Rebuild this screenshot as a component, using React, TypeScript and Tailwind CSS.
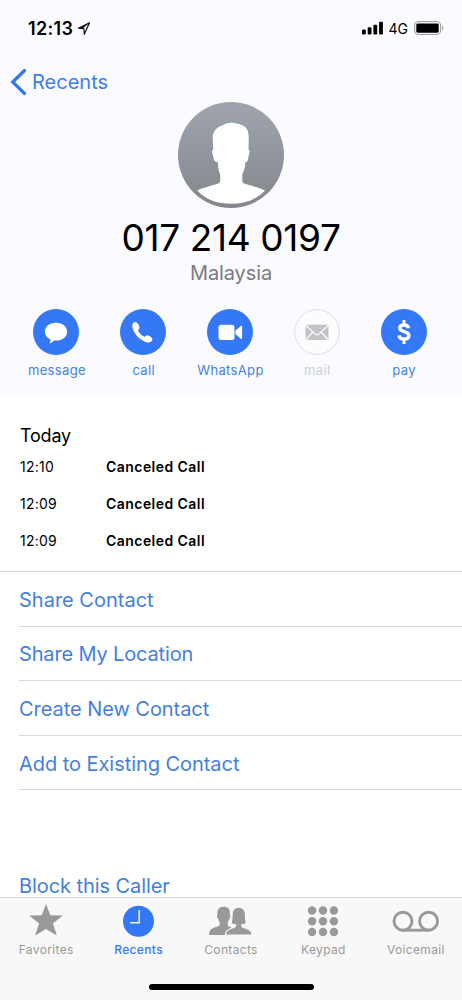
import type { ReactNode } from "react";

function LocationIcon() {
  return (
    <svg width="14" height="15" viewBox="0 0 14 15">
      <path d="M12.500 1.800 1.500 7.200l5.400.5.400 5.600z" fill="none" stroke="#111" strokeWidth="1.200" strokeLinejoin="round" />
      <path d="M12.500 1.800 1.500 7.200l4.200.4z" fill="#111" />
    </svg>
  );
}

function StatusBar() {
  return (
    <div className="flex h-14 items-center justify-between pl-7 pr-[18px]">
      <div className="flex items-center gap-1">
        <span className="pt-px text-[18px] font-semibold leading-6 tracking-[0.3px]">12:13</span>
        <LocationIcon />
      </div>
      <div className="flex items-center gap-[6px]">
        <svg width="21" height="14" viewBox="0 0 21 14">
          <rect x="0" y="8.600" width="3.800" height="4.900" rx="1.200" />
          <rect x="5.700" y="6.300" width="3.800" height="7.200" rx="1.200" />
          <rect x="11.400" y="3.700" width="3.800" height="9.800" rx="1.200" />
          <rect x="17.100" y="0.800" width="3.800" height="12.700" rx="1.200" />
        </svg>
        <span className="pt-px text-[14px] leading-5">4G</span>
        <svg width="30" height="14" viewBox="0 0 30 14">
          <rect x="0.600" y="0.600" width="26" height="12.800" rx="3.400" fill="none" stroke="#999" />
          <rect x="2.300" y="2.500" width="22.400" height="9.200" rx="1.400" />
          <path d="M28.200 4.800c1.600.6 1.600 3.800 0 4.400z" fill="#999" />
        </svg>
      </div>
    </div>
  );
}

function Avatar() {
  return (
    <svg width="106" height="106" viewBox="0 0 106 106">
      <defs>
        <linearGradient id="avatar" x1="0" y1="0" x2="0" y2="1">
          <stop offset="0" stopColor="#9fa4ae" />
          <stop offset="1" stopColor="#83868c" />
        </linearGradient>
      </defs>
      <circle cx="53" cy="53" r="53" fill="url(#avatar)" />
      <path
        fill="#fff"
        d="M19.300 88.500C25 85.500 31 84.500 37 82.500c4-1 5-1.500 5.200-4V72c-1.500-2-2-7-2.500-12-2 0-3.200-.5-3.700-2.500l-2-8c0-1 .4-1.600 1.200-1.600L34.700 36c0-6 3.300-11 10.600-13 3-2 10-3 14-1.200 5 .7 10 3.200 11 9.200.8 4 .3 11 .2 17 .8 0 1.200.6 1 1.600L70 57.500c-.4 2-1.200 2.500-2.500 2.500-.5 5-1 8-3.200 12v6.500c.2 2.500 1.200 3 5.200 4 6 2 12 3 17.500 6C78.500 97.500 67 101.700 53 101.700S27.500 97.500 19.300 88.500z"
      />
    </svg>
  );
}

const actions: { label: string; icon: ReactNode; disabled?: boolean }[] = [
  {
    label: "message",
    icon: <path fill="#fff" d="M23 13.700c6.400 0 11.200 3.900 11.200 9s-4.800 8.900-11.200 8.900c-.7 0-1.400 0-2-.1-1.100 1.600-2.700 2.700-4.700 2.900.9-1 1.400-2.600 1-4-3.300-1.600-5.500-4.500-5.500-7.700 0-5.100 4.800-9 11.200-9z" />,
  },
  {
    label: "call",
    icon: <path fill="#fff" d="M13 14.300c.8-1.100 1.900-1.700 2.900-1.200 1.500.7 3 2.900 3.500 4.700.3 1.200-.1 2-1 2.900-.4.500-.3 1 .1 1.700 1.400 2.200 3.100 3.800 5.300 5.100.7.400 1.200.3 1.600-.2.900-1.100 1.900-1.300 3-.7 1.700.8 3.700 2.100 4 3.400.3 1.100-.8 2.500-2 3.100-2.500 1.100-6.800-.4-10.500-3.400-3.400-2.800-6.500-7-7.300-10.500-.4-1.600-.4-3.600.4-4.900z" />,
  },
  {
    label: "WhatsApp",
    icon: (
      <g fill="#fff">
        <rect x="11.500" y="15.700" width="16" height="15.300" rx="2.800" />
        <path d="m28.500 21.500 5.200-4.500c.8-.6 1.400-.3 1.400.6v11.600c0 .9-.6 1.200-1.400.6l-5.200-4.500z" />
      </g>
    ),
  },
  {
    label: "mail",
    disabled: true,
    icon: (
      <g>
        <path fill="#c3c3c6" d="M11.500 15.700h23V31h-23z" />
        <path d="m11.500 16 9.500 9q2 1.500 4 0l9.500-9M11.500 31l7.500-8M34.500 31l-7.500-8" fill="none" stroke="#fafaff" strokeWidth="1.300" />
      </g>
    ),
  },
  {
    label: "pay",
    icon: (
      <g fill="none" stroke="#fff" strokeWidth="3.500">
        <path d="M27.500 19.200c-.3-2.200-2-3.200-4.500-3.200-2.600 0-4.200 1.200-4.200 3.100 0 4.900 9 2.200 9 7.300 0 2.300-1.800 3.600-4.700 3.600-2.900 0-4.700-1.300-4.900-3.700" />
        <path d="M23 11v5M23 30v5" strokeWidth="2.900" />
      </g>
    ),
  },
];

const calls = ["12:10", "12:09", "12:09"];

const links = [
  { label: "Share Contact", tracking: "tracking-normal" },
  { label: "Share My Location", tracking: "tracking-[-0.15px]" },
  { label: "Create New Contact", tracking: "tracking-[-0.05px]" },
  { label: "Add to Existing Contact", tracking: "tracking-[-0.05px]" },
];

const tabs: { label: string; icon: ReactNode; active?: boolean }[] = [
  {
    label: "Favorites",
    icon: <path d="m24 2 4.300 11.300 12.500.3-9.900 7.800 4 12L24 27l-10.900 6.400 4-12-9.900-7.800 12.500-.3z" />,
  },
  {
    label: "Recents",
    active: true,
    icon: (
      <>
        <circle cx="23.500" cy="19.300" r="15.500" />
        <path d="M24.200 8v12.800h-9" fill="none" stroke="#f8f8f8" strokeWidth="1.500" />
      </>
    ),
  },
  {
    label: "Contacts",
    icon: (
      <>
        <path d="M16.700 4.800c4.600 0 6.600 2.600 6.200 7.500.8.500.5 4-.7 4.500-.3 1.700-.8 2.600-1.500 3.600v2.400c0 1.300 1 1.700 3.300 2.700 3.500 1.500 5 2.500 5 7.500H2c0-4.700 2-6 5.500-7.500 2.600-1 5.200-1.400 5.200-2.700v-2.400c-.7-1-1.200-1.900-1.500-3.600-1.200-.5-1.500-4-.7-4.500-.4-4.900 1.600-7.500 6.200-7.500z" />
        <path
          d="M31.800 5.200c4.700 0 6.500 2.700 6.600 7.300 0 3.300.4 6.500 1 9-1.200.7-2.600 1-4.500 1v1.700c.6 1.400 3 1.800 5.200 2.600 3.500 1.300 4.900 2.700 4.900 6.200H18.400c0-3.500 1.400-4.900 4.900-6.200 2.200-.8 4.600-1.200 5.200-2.600v-1.700c-1.900 0-3.300-.3-4.500-1 .7-2.500 1.100-5.700 1.100-9 .1-4.600 2-7.300 6.700-7.300z"
          stroke="#f8f8f8"
          strokeWidth="1.200"
        />
      </>
    ),
  },
  {
    label: "Keypad",
    icon: [8.5, 19.2, 30].map((y) => [13.1, 24, 34.9].map((x) => <circle key={`${x}-${y}`} cx={x} cy={y} r="4.200" />)),
  },
  {
    label: "Voicemail",
    icon: (
      <g fill="none" stroke="currentColor" strokeWidth="2.900">
        <circle cx="11" cy="19.200" r="9" />
        <circle cx="36.600" cy="19.200" r="9" />
        <path d="M11 28.200h26" />
      </g>
    ),
  },
];

export default function App() {
  return (
    <div className="flex h-[1000px] w-[462px] flex-col overflow-hidden bg-white font-[Inter,sans-serif] text-black">
      <header className="h-[396px] shrink-0 bg-[#fafaff]">
        <StatusBar />
        <div className="flex h-[46px] items-center gap-[5px] pl-[10px] pt-[5px] text-[#3f7fe8]">
          <svg width="17" height="28" viewBox="0 0 17 28">
            <path d="M14.500 2.500 2.700 14l11.800 11.500" fill="none" stroke="#3478e8" strokeWidth="3.200" strokeLinecap="round" />
          </svg>
          <span className="text-[20px] leading-6">Recents</span>
        </div>
        <div className="flex flex-col items-center">
          <Avatar />
          <h1 className="mt-2 text-[37px] leading-[44px] tracking-[-0.35px]">017 214 0197</h1>
          <p className="mt-[1px] text-[20px] leading-6 tracking-[-0.1px] text-[#7b7b80]">Malaysia</p>
        </div>
        <div className="mt-6 flex pl-[13px] pr-[15px]">
          {actions.map((a) => (
            <div key={a.label} className={`flex flex-1 flex-col items-center ${a.disabled ? "text-[#cfcfd4]" : "text-[#4384e6]"}`}>
              <svg width="46" height="46" viewBox="0 0 46 46">
                <circle cx="23" cy="23" r={a.disabled ? 22.3 : 23} fill={a.disabled ? "#fcfcff" : "#3478f6"} stroke={a.disabled ? "#dedee2" : "none"} />
                {a.icon}
              </svg>
              <span className="mt-[6px] pl-px text-[13px] leading-[18px] tracking-[0.35px]">{a.label}</span>
            </div>
          ))}
        </div>
      </header>

      <section className="h-[176px] shrink-0 border-b border-[#d4d4d6] pl-5 pt-7">
        <h2 className="mb-[2px] text-[18px] leading-6 tracking-[-0.2px]">Today</h2>
        {calls.map((time, i) => (
          <div key={i} className="flex h-[37px] items-center pb-[3px] text-[14px] leading-5">
            <span className="w-[86px] tracking-[0.25px]">{time}</span>
            <span className="font-semibold tracking-[0.45px]">Canceled Call</span>
          </div>
        ))}
      </section>

      <nav className="h-[325px] shrink-0 pl-[19px] text-[20px] leading-6 text-[#447fdd]">
        {links.map((l) => (
          <div key={l.label} className={`flex h-[54.6px] items-center border-b border-[#d9d9db] pt-[2px] ${l.tracking}`}>
            {l.label}
          </div>
        ))}
        <div className="mt-[84px] tracking-[-0.08px]">Block this Caller</div>
      </nav>

      <footer className="flex flex-1 flex-col border-t border-[#d9d9da] bg-[#f8f8f8]">
        <div className="flex">
          {tabs.map((t) => (
            <div key={t.label} className={`flex flex-1 flex-col items-center pt-1 ${t.active ? "text-[#3478f6]" : "text-[#999]"}`}>
              <svg width="48" height="38" viewBox="0 0 48 38" fill="currentColor">
                {t.icon}
              </svg>
              <span className={`mt-[2px] text-[12px] leading-4 tracking-[0.35px] ${t.active ? "font-medium" : ""}`}>{t.label}</span>
            </div>
          ))}
        </div>
        <div className="mx-auto mt-[26px] h-[6px] w-[165px] rounded-full bg-black" />
      </footer>
    </div>
  );
}
